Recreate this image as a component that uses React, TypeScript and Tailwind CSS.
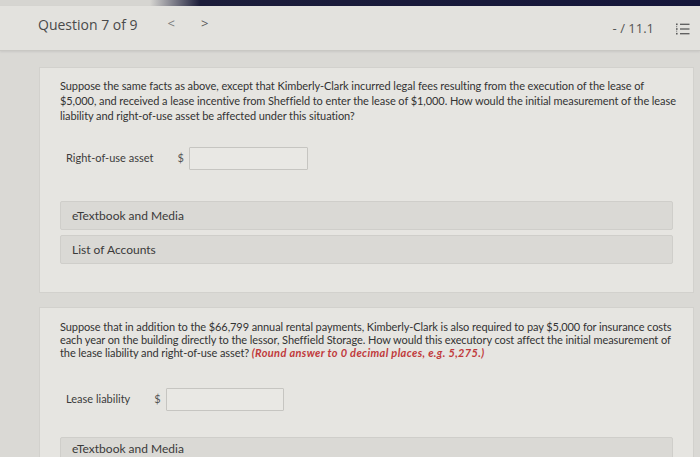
import React from "react";

const ListIcon = () => (
  <svg width="14" height="12" viewBox="0 0 14 12" fill="none">
    <rect x="0" y="0.5" width="1.6" height="1.6" fill="#5a5a5a" />
    <rect x="0" y="5.2" width="1.6" height="1.6" fill="#5a5a5a" />
    <rect x="0" y="9.9" width="1.6" height="1.6" fill="#5a5a5a" />
    <rect x="0" y="3" width="1.2" height="1.2" fill="#8a8a8a" />
    <rect x="0" y="7.6" width="1.2" height="1.2" fill="#8a8a8a" />
    <line x1="4" y1="1.3" x2="13.5" y2="1.3" stroke="#5a5a5a" strokeWidth="1.3" />
    <line x1="4" y1="6" x2="13.5" y2="6" stroke="#5a5a5a" strokeWidth="1.3" />
    <line x1="4" y1="10.7" x2="13.5" y2="10.7" stroke="#5a5a5a" strokeWidth="1.3" />
  </svg>
);

const AmountRow = ({ label, inputWidth }: { label: string; inputWidth: string }) => (
  <div className="flex items-center pl-[6px] text-[11px] text-[#3c3c3c]">
    <span className="mr-[24px]">{label}</span>
    <span className="mr-[5px] text-[#555]">$</span>
    <div
      className={`${inputWidth} h-[23px] border border-[#c6c5c1] bg-[#e9e8e4] rounded-[1px]`}
    />
  </div>
);

const LinkBox = ({ text }: { text: string }) => (
  <div className="flex h-[29px] items-center rounded-[2px] border border-[#cfceca] bg-[#dad9d5] pl-[11px] text-[12px] text-[#3a3a3a]">
    {text}
  </div>
);

export default function App() {
  return (
    <div className="h-[457px] w-[700px] overflow-hidden bg-[#dad9d5] font-['Lato','Open_Sans',sans-serif]">
      <div className="h-[6px] w-full bg-[linear-gradient(to_right,#d6d5d1_0px,#d6d5d1_150px,#1c1d3a_200px,#15163a_100%)]" />

      <header className="flex h-[45px] items-center border-b border-[#c9c8c4] bg-[#e3e2de] pb-[8px] pl-[38px] pr-[10px] font-['Open_Sans',sans-serif] shadow-[0_1px_2px_rgba(0,0,0,0.08)]">
        <span className="text-[14px] text-[#4a4a4a]">Question 7 of 9</span>
        <span className="ml-[30px] text-[13px] text-[#7a7a7a]">&lt;</span>
        <span className="ml-[26px] text-[13px] text-[#5a5a5a]">&gt;</span>
        <span className="ml-auto mt-[10px] text-[13px] text-[#555]">- / 11.1</span>
        <span className="ml-[22px] mt-[10px]">
          <ListIcon />
        </span>
      </header>

      <main className="flex flex-col gap-[14px] pt-[16px] pl-[39px] pr-[6px]">
        <section className="w-[655px] border border-[#d2d1cd] bg-[#e6e5e1] px-[20px] pt-[10px] pb-[28px]">
          <p className="whitespace-nowrap text-[11px] leading-[15px] tracking-[-0.08px] text-[#333]">
            Suppose the same facts as above, except that Kimberly-Clark incurred legal fees resulting from the execution of the lease of
            <br />
            $5,000, and received a lease incentive from Sheffield to enter the lease of $1,000. How would the initial measurement of the lease
            <br />
            liability and right-of-use asset be affected under this situation?
          </p>
          <div className="mt-[24px]">
            <AmountRow label="Right-of-use asset" inputWidth="w-[119px]" />
          </div>
          <div className="mt-[31px] flex flex-col gap-[5px]">
            <LinkBox text="eTextbook and Media" />
            <LinkBox text="List of Accounts" />
          </div>
        </section>

        <section className="w-[655px] border border-[#d2d1cd] bg-[#e6e5e1] px-[20px] pt-[12px] pb-[20px]">
          <p className="whitespace-nowrap text-[11px] leading-[13px] tracking-[-0.09px] text-[#333]">
            Suppose that in addition to the $66,799 annual rental payments, Kimberly-Clark is also required to pay $5,000 for insurance costs
            <br />
            each year on the building directly to the lessor, Sheffield Storage. How would this executory cost affect the initial measurement of
            <br />
            the lease liability and right-of-use asset?{" "}
            <span className="font-bold italic tracking-[0.35px] text-[#c0393b]">
              (Round answer to 0 decimal places, e.g. 5,275.)
            </span>
          </p>
          <div className="mt-[29px]">
            <AmountRow label="Lease liability" inputWidth="w-[118px]" />
          </div>
          <div className="mt-[26px]">
            <div className="flex h-[29px] items-start rounded-[2px] border border-[#cfceca] bg-[#dad9d5] pl-[11px] pt-[2px] text-[12px] text-[#3a3a3a]">
              eTextbook and Media
            </div>
          </div>
        </section>
      </main>
    </div>
  );
}
